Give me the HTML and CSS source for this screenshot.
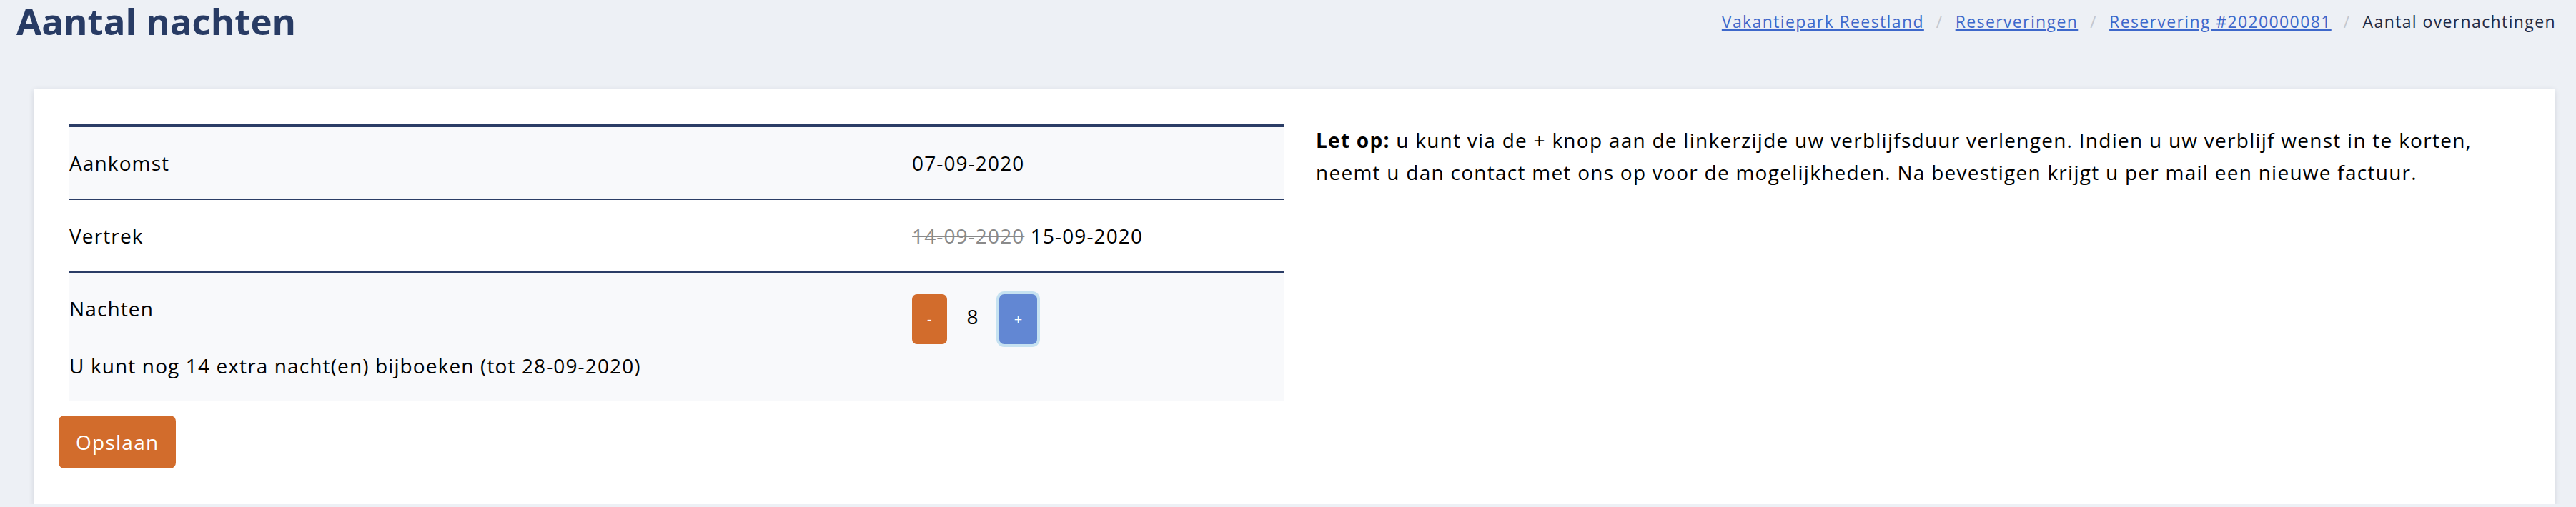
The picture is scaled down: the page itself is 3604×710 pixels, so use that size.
FILE: index.html
```html
<!DOCTYPE html>
<html lang="nl">
<head>
<meta charset="utf-8">
<title>Aantal nachten</title>
<link rel="stylesheet" href="styles.css">
</head>
<body>
<header class="page-header">
  <h1 class="page-title">Aantal nachten</h1>
  <ol class="breadcrumb">
    <li><a href="#">Vakantiepark Reestland</a></li>
    <li><a href="#">Reserveringen</a></li>
    <li><a href="#">Reservering #2020000081</a></li>
    <li class="active">Aantal overnachtingen</li>
  </ol>
</header>
<main class="card">
  <form class="form">
    <div class="layout">
      <div class="col-left">
        <table class="nights-table">
          <tbody>
            <tr class="striped">
              <td class="label">Aankomst</td>
              <td class="value">07-09-2020</td>
            </tr>
            <tr>
              <td class="label">Vertrek</td>
              <td class="value"><span class="old">14-09-2020</span> 15-09-2020</td>
            </tr>
            <tr class="striped">
              <td class="label">
                <div>Nachten</div>
                <div class="extra">U kunt nog 14 extra nacht(en) bijboeken (tot 28-09-2020)</div>
              </td>
              <td class="value">
                <div class="stepper">
                  <button type="button" class="btn-step minus">-</button>
                  <span class="count">8</span>
                  <button type="button" class="btn-step plus">+</button>
                </div>
              </td>
            </tr>
          </tbody>
        </table>
      </div>
      <div class="col-right">
        <p class="note"><strong>Let op:</strong> u kunt via de + knop aan de linkerzijde uw verblijfsduur verlengen. Indien u uw verblijf wenst in te korten, neemt u dan contact met ons op voor de mogelijkheden. Na bevestigen krijgt u per mail een nieuwe factuur.</p>
      </div>
    </div>
    <button type="submit" class="btn-save">Opslaan</button>
  </form>
</main>
</body>
</html>
```
FILE: styles.css
```css
* { box-sizing: border-box; }

body {
  margin: 0;
  background: #edf0f5;
  font-family: "Open Sans", "Noto Sans", sans-serif;
  color: #000;
}

.page-header {
  display: flex;
  justify-content: space-between;
  align-items: flex-start;
  height: 124px;
  padding: 0 28px 0 23px;
}

.page-title {
  margin: 0;
  font-size: 51px;
  line-height: 58px;
  font-weight: 700;
  color: #283b64;
}

.breadcrumb {
  display: flex;
  list-style: none;
  margin: 14px 0 0;
  padding: 0;
  font-size: 23px;
  line-height: 33px;
  letter-spacing: 0.06em;
}

.breadcrumb li + li::before {
  content: "/";
  color: #c3c7ce;
  padding: 0 17px;
}

.breadcrumb a {
  color: #3d68cb;
  text-decoration: underline;
}

.breadcrumb .active {
  color: #1f2a44;
}

.card {
  display: block;
  margin: 0 30px 0 48px;
  background: #fff;
  box-shadow: 0 3px 8px rgba(30, 40, 60, 0.16);
  padding: 50px 34px;
}

.layout {
  display: grid;
  grid-template-columns: 1fr 1fr;
  column-gap: 45px;
  padding-left: 15px;
}

.nights-table {
  width: 100%;
  border-collapse: separate;
  border-spacing: 0;
  border-top: 4px solid #2b3d66;
  font-size: 28px;
  line-height: 42px;
  letter-spacing: 0.04em;
}

.nights-table td {
  padding: 29px 0;
  vertical-align: top;
  border-bottom: 2px solid #2b3d66;
}

.nights-table tr:last-child td {
  border-bottom: none;
}

.nights-table tr.striped td {
  background: #f8f9fb;
}

.nights-table td.label {
  width: 69.4%;
}

.extra {
  margin-top: 38px;
}

.old {
  color: #8a8a8a;
  text-decoration: line-through;
}

.stepper {
  display: flex;
  align-items: baseline;
  gap: 28px;
  margin-top: 1px;
}

.btn-step {
  border: 0;
  border-radius: 7px;
  color: #fff;
  font-family: inherit;
  font-size: 20px;
  line-height: 22px;
  padding: 24px 21px;
  letter-spacing: 0;
}

.btn-step.minus {
  background: #d26c2c;
}

.btn-step.plus {
  background: #6287d3;
  box-shadow: 0 0 0 4px #c6e2f1;
}

.count {
  line-height: 42px;
}

.note {
  margin: 0;
  max-width: 1640px;
  font-size: 28px;
  line-height: 45px;
  letter-spacing: 0.045em;
}

.note strong {
  font-weight: 700;
}

.btn-save {
  display: block;
  margin-top: 20px;
  background: #d26c2c;
  color: #fff;
  border: 0;
  border-radius: 8px;
  font-family: inherit;
  font-size: 28px;
  line-height: 42px;
  padding: 16px 24px;
  letter-spacing: 0.045em;
}
```
